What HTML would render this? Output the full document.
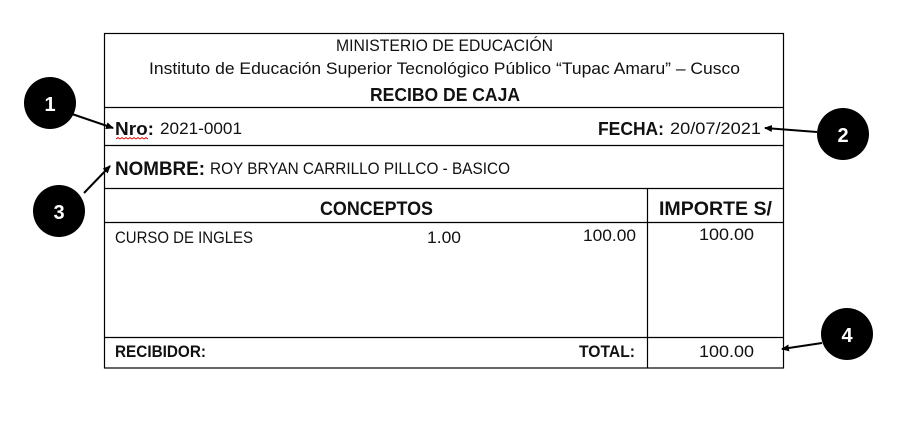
<!DOCTYPE html>
<html><head><meta charset="utf-8"><style>
html,body{margin:0;padding:0;background:#fff;width:905px;height:425px;overflow:hidden}
svg{display:block}
text{font-family:"Liberation Sans",sans-serif;fill:#111}
.b{font-weight:bold}
</style></head><body>
<svg width="905" height="425" viewBox="0 0 905 425" xmlns="http://www.w3.org/2000/svg">
<defs><marker id="ah" markerWidth="8" markerHeight="8" refX="7" refY="4" orient="auto" markerUnits="userSpaceOnUse"><path d="M0,0.5 L8,4 L0,7.5 Z" fill="#000"/></marker></defs>
<g stroke="#000" stroke-width="1.2" fill="none">
<rect x="104.5" y="33.5" width="679" height="334.5"/>
<line x1="104" y1="107.5" x2="784" y2="107.5"/>
<line x1="104" y1="145.5" x2="784" y2="145.5"/>
<line x1="104" y1="188.5" x2="784" y2="188.5"/>
<line x1="104" y1="222.5" x2="784" y2="222.5"/>
<line x1="104" y1="337.5" x2="784" y2="337.5"/>
<line x1="647.5" y1="188" x2="647.5" y2="368"/>
</g>
<text x="336" y="51" font-size="16.5" textLength="217" lengthAdjust="spacingAndGlyphs">MINISTERIO DE EDUCACIÓN</text>
<text x="149" y="74" font-size="16.5" textLength="591" lengthAdjust="spacingAndGlyphs">Instituto de Educación Superior Tecnológico Público “Tupac Amaru” – Cusco</text>
<text class="b" x="370" y="101" font-size="18" textLength="150" lengthAdjust="spacingAndGlyphs">RECIBO DE CAJA</text>
<text class="b" x="115" y="135" font-size="18" textLength="39" lengthAdjust="spacingAndGlyphs">Nro:</text>
<path d="M116,139 l2,-1.5 2,1.5 2,-1.5 2,1.5 2,-1.5 2,1.5 2,-1.5 2,1.5 2,-1.5 2,1.5 2,-1.5 2,1.5 2,-1.5 2,1.5 2,-1.5 2,1.5" stroke="#c00" stroke-width="0.8" fill="none"/>
<text x="160" y="134" font-size="16.5" textLength="82" lengthAdjust="spacingAndGlyphs">2021-0001</text>
<text class="b" x="598" y="135" font-size="18" textLength="66" lengthAdjust="spacingAndGlyphs">FECHA:</text>
<text x="670" y="134" font-size="16.5" textLength="91" lengthAdjust="spacingAndGlyphs">20/07/2021</text>
<text class="b" x="115" y="175" font-size="19" textLength="90" lengthAdjust="spacingAndGlyphs">NOMBRE:</text>
<text x="210" y="174" font-size="16.5" textLength="300" lengthAdjust="spacingAndGlyphs">ROY BRYAN CARRILLO PILLCO - BASICO</text>
<text class="b" x="320" y="215" font-size="19" textLength="113" lengthAdjust="spacingAndGlyphs">CONCEPTOS</text>
<text class="b" x="659" y="215" font-size="19" textLength="113" lengthAdjust="spacingAndGlyphs">IMPORTE S/</text>
<text x="115" y="243" font-size="16.5" textLength="138" lengthAdjust="spacingAndGlyphs">CURSO DE INGLES</text>
<text x="427" y="243" font-size="16.5" textLength="34" lengthAdjust="spacingAndGlyphs">1.00</text>
<text x="583" y="241" font-size="16.5" textLength="53" lengthAdjust="spacingAndGlyphs">100.00</text>
<text x="699" y="240" font-size="16.5" textLength="55" lengthAdjust="spacingAndGlyphs">100.00</text>
<text class="b" x="115" y="357" font-size="16.5" textLength="91" lengthAdjust="spacingAndGlyphs">RECIBIDOR:</text>
<text class="b" x="579" y="357" font-size="16.5" textLength="56" lengthAdjust="spacingAndGlyphs">TOTAL:</text>
<text x="699" y="357" font-size="16.5" textLength="55" lengthAdjust="spacingAndGlyphs">100.00</text>
<g stroke="#000" stroke-width="2" fill="none" marker-end="url(#ah)">
<line x1="72" y1="114" x2="113" y2="128"/>
<line x1="817" y1="132" x2="765" y2="128"/>
<line x1="84" y1="193" x2="110" y2="166"/>
<line x1="822" y1="343" x2="782" y2="349"/>
</g>
<circle cx="50" cy="103" r="26" fill="#000"/>
<circle cx="843" cy="134" r="26" fill="#000"/>
<circle cx="59" cy="211" r="26" fill="#000"/>
<circle cx="847" cy="334" r="26" fill="#000"/>
<g font-size="20" text-anchor="middle">
<text x="50" y="111" style="fill:#fff;font-weight:bold">1</text>
<text x="843" y="142" style="fill:#fff;font-weight:bold">2</text>
<text x="59" y="219" style="fill:#fff;font-weight:bold">3</text>
<text x="847" y="342" style="fill:#fff;font-weight:bold">4</text>
</g>
</svg>
</body></html>
